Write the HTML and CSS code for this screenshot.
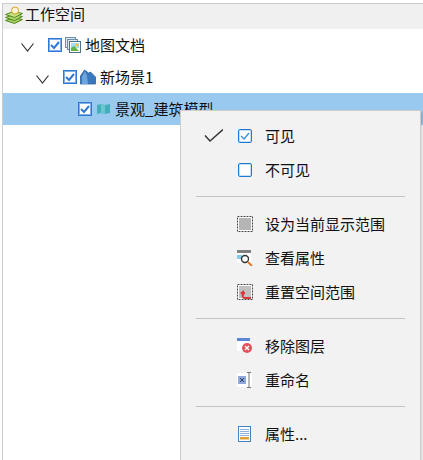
FILE: index.html
```html
<!DOCTYPE html>
<html lang="en">
<head>
    <meta charset="UTF-8">
    <title>工作空间</title>
    <link rel="stylesheet" href="styles.css">
</head>
<body>
    <div class="panel">
        <div class="panel-head">
            <svg class="head-icon" width="18" height="18" viewBox="0 0 18 18">
                <path d="M.5 14.500l8-3 9 2-8 4z" fill="#a5cc62" stroke="#4f8a1e"/>
                <path d="M.5 11.500l8-3 9 2-8 4z" fill="#b5d56e" stroke="#4f8a1e"/>
                <path d="M.5 8.500l8-3 9 2-8 4z" fill="#c4de80" stroke="#4f8a1e"/>
                <circle cx="10" cy="4.500" r="3.500" fill="#fbf6d0" stroke="#d9a520"/>
            </svg>
            <span class="label head-label">工作空间</span>
        </div>
        <div class="tree-row level-1">
            <svg class="chevron" width="13" height="9" viewBox="0 0 13 9"><path d="M.5.5L6.500 8l6-7.500" fill="none" stroke="#333" stroke-width="1.200"/></svg>
            <span class="tree-check"><svg width="10" height="10" viewBox="0 0 10 10"><path d="M1 5l3 3 5-6" fill="none" stroke="#2f78d6" stroke-width="2"/></svg></span>
            <svg class="tree-icon" width="16" height="16" viewBox="0 0 16 16">
                <rect x=".5" y=".5" width="10" height="10" fill="#dce9f5" stroke="#6f8fa8"/>
                <rect x="2.500" y="2.500" width="10" height="10" fill="#dce9f5" stroke="#6f8fa8"/>
                <rect x="4.500" y="4.500" width="11" height="11" fill="#fff" stroke="#4f7089"/>
                <rect x="6" y="6" width="8" height="5" fill="#a8dcf2"/>
                <path d="M6 14v-3l3-2 5 5z" fill="#62b244"/>
                <circle cx="12" cy="8" r="1.500" fill="#f4c430"/>
            </svg>
            <span class="label">地图文档</span>
        </div>
        <div class="tree-row level-2">
            <svg class="chevron" width="13" height="9" viewBox="0 0 13 9"><path d="M.5.5L6.500 8l6-7.500" fill="none" stroke="#333" stroke-width="1.200"/></svg>
            <span class="tree-check"><svg width="10" height="10" viewBox="0 0 10 10"><path d="M1 5l3 3 5-6" fill="none" stroke="#2f78d6" stroke-width="2"/></svg></span>
            <svg class="tree-icon" width="16" height="16" viewBox="0 0 16 16">
                <path d="M.5 15V7l4-6 4 3 2-1 5 5v7z" fill="#3a78bd" stroke="#2a5f9e" stroke-width=".8"/>
                <path d="M5 2l2 5 1 8H2V8z" fill="#6da6dd"/>
            </svg>
            <span class="label">新场景1</span>
        </div>
        <div class="tree-row level-3 selected">
            <span class="tree-check"><svg width="10" height="10" viewBox="0 0 10 10"><path d="M1 5l3 3 5-6" fill="none" stroke="#2f78d6" stroke-width="2"/></svg></span>
            <svg class="tree-icon" width="16" height="16" viewBox="0 0 16 16">
                <path d="M2 4l4-1 4 1 5-1v9l-5 1-4-1-4 1z" fill="#45aebd"/>
                <path d="M6 3l4 1v9l-4-1z" fill="#6cc6d2"/>
            </svg>
            <span class="label">景观_建筑模型</span>
        </div>
    </div>

    <div class="context-menu">
        <div class="menu-item">
            <span class="menu-mark"><svg width="20" height="14" viewBox="0 0 20 14"><path d="M2 6.500l5 5.500L20 .5" fill="none" stroke="#333" stroke-width="1.400"/></svg></span>
            <span class="menu-box"><svg width="10" height="10" viewBox="0 0 10 10"><path d="M1 5l3 3 5-6" fill="none" stroke="#3c8ad8" stroke-width="1.300"/></svg></span>
            <span class="label">可见</span>
        </div>
        <div class="menu-item">
            <span class="menu-mark"></span>
            <span class="menu-box"></span>
            <span class="label">不可见</span>
        </div>
        <div class="menu-sep"></div>
        <div class="menu-item">
            <span class="menu-mark"></span>
            <svg class="menu-icon" width="16" height="16" viewBox="0 0 16 16">
                <rect x="0" y="0" width="16" height="16" fill="#fff"/>
                <rect x="2" y="2" width="12" height="12" fill="#b5b5b5"/>
                <rect x=".5" y=".5" width="15" height="15" fill="none" stroke="#444" stroke-dasharray="2 1"/>
            </svg>
            <span class="label">设为当前显示范围</span>
        </div>
        <div class="menu-item">
            <span class="menu-mark"></span>
            <svg class="menu-icon" width="16" height="16" viewBox="0 0 16 16">
                <rect x="0" y="0" width="14" height="3" fill="#808080"/>
                <rect x="0" y="3" width="14" height="10" fill="#fff"/>
                <rect x="0" y="5" width="5" height="4" fill="#7fcdec"/>
                <circle cx="8" cy="9" r="3.500" fill="#fff" stroke="#333" stroke-width="1.400"/>
                <path d="M11 12l4 4" stroke="#e07b30" stroke-width="2"/>
            </svg>
            <span class="label">查看属性</span>
        </div>
        <div class="menu-item">
            <span class="menu-mark"></span>
            <svg class="menu-icon" width="16" height="16" viewBox="0 0 16 16">
                <rect x="0" y="0" width="16" height="16" fill="#fff"/>
                <rect x="2" y="2" width="12" height="12" fill="#c0c0c0"/>
                <rect x=".5" y=".5" width="15" height="15" fill="none" stroke="#444" stroke-dasharray="2 1"/>
                <path d="M14 14H8a2.500 2.500 0 0 1 0-5H6" fill="none" stroke="#d9363e" stroke-width="1.800"/>
                <path d="M7 6L3 9l4 3z" fill="#d9363e"/>
            </svg>
            <span class="label">重置空间范围</span>
        </div>
        <div class="menu-sep"></div>
        <div class="menu-item">
            <span class="menu-mark"></span>
            <svg class="menu-icon" width="16" height="16" viewBox="0 0 16 16">
                <rect x="0" y="0" width="13" height="13" fill="#fff"/>
                <rect x="0" y="0" width="13" height="3" fill="#5b87d6"/>
                <circle cx="10" cy="10" r="5" fill="#e2525c"/>
                <path d="M8 8l4 4M12 8l-4 4" stroke="#fff" stroke-width="1.300"/>
            </svg>
            <span class="label">移除图层</span>
        </div>
        <div class="menu-item">
            <span class="menu-mark"></span>
            <svg class="menu-icon" width="16" height="16" viewBox="0 0 16 16">
                <rect x="0" y="1" width="15" height="14" fill="#fff"/>
                <rect x="1" y="4" width="8" height="8" fill="#8fa9dc"/>
                <path d="M3 6l4 4M7 6l-4 4" stroke="#2f3f66" stroke-width="1"/>
                <path d="M10 .5h4M12 .5v15M10 15.500h4" fill="none" stroke="#777" stroke-width="1"/>
            </svg>
            <span class="label">重命名</span>
        </div>
        <div class="menu-sep"></div>
        <div class="menu-item">
            <span class="menu-mark"></span>
            <svg class="menu-icon" width="16" height="16" viewBox="0 0 16 16">
                <rect x="1.500" y=".5" width="12" height="15" fill="#fff" stroke="#4a7fc4"/>
                <path d="M3 3.500h9M3 5.500h9M3 7.500h9M3 9.500h9" stroke="#8fb0dc"/>
                <rect x="3" y="11" width="9" height="2.500" fill="#e0a030"/>
            </svg>
            <span class="label">属性...</span>
        </div>
    </div>
</body>
</html>
```

FILE: styles.css
```css
html, body {
    height: 100%;
}
body {
    margin: 0;
    overflow: hidden;
    background: #fff;
    color: #111;
    font-family: "Noto Sans CJK SC", "Liberation Sans", sans-serif;
    font-size: 15px;
}
.label {
    margin-top: -2px;
}
.panel {
    margin: 3px 0 0 2px;
    height: 457px;
    box-sizing: border-box;
    border-top: 1px solid #ccc;
    border-left: 1px solid #ccc;
}
.panel-head {
    display: flex;
    align-items: center;
    gap: 2px;
    height: 25px;
    padding-left: 2px;
    background: #f0f0f0;
}
.head-icon {
    flex: none;
    margin-top: -3px;
}
.head-label {
    margin-top: -6px;
}
.tree-row {
    display: flex;
    align-items: center;
    height: 32px;
    box-sizing: border-box;
}
.level-1 {
    padding-left: 18px;
}
.level-2 {
    padding-left: 33px;
}
.level-3 {
    padding-left: 75px;
}
.selected {
    background: #99c9ef;
}
.chevron {
    flex: none;
    margin: 5px 14px 0 0;
}
.tree-check {
    display: flex;
    align-items: center;
    justify-content: center;
    width: 12px;
    height: 12px;
    border: 1px solid #2f78d6;
    box-shadow: inset 0 0 0 1px rgba(47, 120, 214, 0.6);
    background: #fff;
    margin-right: 3px;
}
.tree-icon {
    flex: none;
    margin-right: 4px;
}
.context-menu {
    position: absolute;
    left: 180px;
    top: 110px;
    width: 241px;
    height: 360px;
    box-sizing: border-box;
    padding-top: 8px;
    background: #f2f2f2;
    border: 1px solid #ccc;
    box-shadow: 2px 2px 2px rgba(0, 0, 0, 0.15);
}
.menu-item {
    display: flex;
    align-items: center;
    height: 34px;
    padding-left: 22px;
}
.menu-mark {
    width: 34px;
    flex: none;
}
.menu-mark svg {
    display: block;
}
.menu-box {
    display: flex;
    align-items: center;
    justify-content: center;
    flex: none;
    width: 12px;
    height: 12px;
    border: 1px solid #1f78d1;
    border-radius: 2px;
    box-shadow: inset 0 0 0 1px rgba(31, 120, 209, 0.25);
    margin: 0 13px 0 1px;
    background: #fff;
}
.menu-icon {
    flex: none;
    margin-right: 12px;
}
.menu-sep {
    height: 1px;
    margin: 9px 15px 10px;
    background: #c4c4c4;
}
```
